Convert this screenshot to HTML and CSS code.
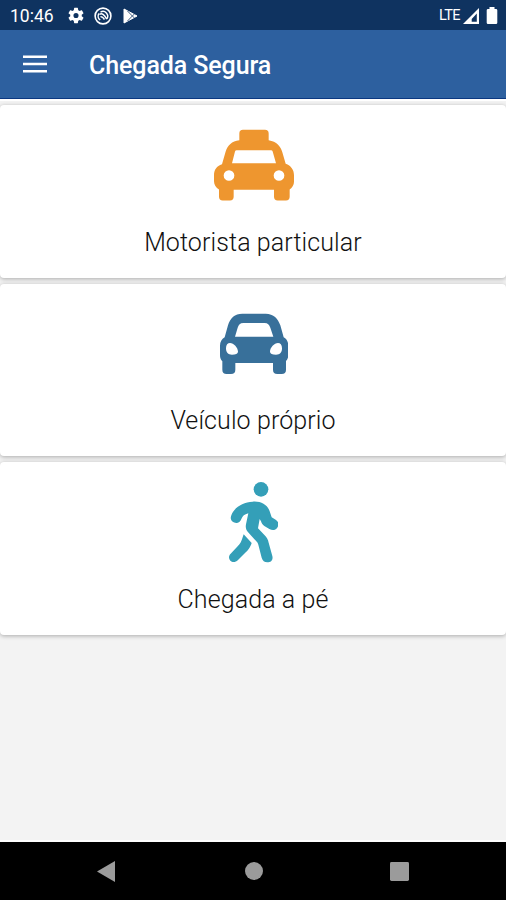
FILE: index.html
```html
<!DOCTYPE html>
<html lang="pt-BR">
<head>
  <meta charset="UTF-8" />
  <meta name="viewport" content="width=device-width, initial-scale=1.0"/>
  <title>Chegada Segura</title>
  <link rel="stylesheet" href="styles.css">
</head>
<body>
  <div class="status-bar">
    <span class="time">10:46</span>
    <svg class="icon-gear" width="16" height="17" viewBox="2 2 20 20" fill="#fff"><path d="M19.14 12.94c.04-.3.06-.61.06-.94 0-.32-.02-.64-.07-.94l2.03-1.58a.49.49 0 0 0 .12-.61l-1.92-3.32a.49.49 0 0 0-.59-.22l-2.39.96a7 7 0 0 0-1.62-.94l-.36-2.54a.48.48 0 0 0-.48-.41h-3.84a.47.47 0 0 0-.47.41l-.36 2.54c-.59.24-1.13.57-1.62.94l-2.39-.96a.48.48 0 0 0-.59.22L2.74 8.87a.47.47 0 0 0 .12.61l2.03 1.58c-.05.3-.09.63-.09.94s.02.64.07.94l-2.03 1.58a.49.49 0 0 0-.12.61l1.92 3.32c.12.22.37.29.59.22l2.39-.96c.5.38 1.03.7 1.62.94l.36 2.54c.05.24.24.41.48.41h3.84c.24 0 .44-.17.47-.41l.36-2.54c.59-.24 1.13-.56 1.62-.94l2.39.96c.22.08.47 0 .59-.22l1.92-3.32a.47.47 0 0 0-.12-.61zM12 15.2a3.2 3.2 0 1 1 0-6.4 3.2 3.2 0 0 1 0 6.4z"/></svg>
    <svg class="icon-sync" width="18" height="18" viewBox="0 0 18 18" fill="none" stroke="#fff"><circle cx="9" cy="9" r="7.9" stroke-width="1.600"/><path d="M6.200 13A4.700 4.700 0 0 1 5 6.500M6.500 5.100a4.700 4.700 0 0 1 6.300 6.700" stroke-width="1.500"/><path d="M5.500 7.300c2.600-1.300 4.300 0 7.300 4.900M6.500 9.800c1.500-.4 2.500.5 4 2.700" stroke-width="1.500"/></svg>
    <svg class="icon-play" width="15" height="16" viewBox="0 0 15 16"><path d="M1 1l13 7L1 15z" fill="#fff" stroke="#fff" stroke-linejoin="round"/><path d="M4.500 3L9.300 8l-4.800 5M11.700 5.800L9.300 8l2.400 2.200" fill="none" stroke="#0f3360" stroke-width=".8"/></svg>
    <span class="network">LTE</span>
    <svg class="icon-signal" width="16" height="16" viewBox="0 0 16 16"><path fill="#fff" fill-rule="evenodd" d="M0 16L16 0v16zM8.700 11v2.700h5.100V5.400z"/></svg>
    <svg class="icon-battery" width="12" height="17" viewBox="0 0 12 17" fill="#fff"><path d="M3.500 0h5v2H10q1.300 0 1.300 1.300v12.400q0 1.300-1.300 1.300H2q-1.300 0-1.300-1.300V3.300Q.7 2 2 2h1.500z"/></svg>
  </div>

  <header>
    <svg class="menu" width="24" height="18" viewBox="0 0 24 18" fill="#fff"><path d="M0 .5h24V3H0zM0 7.700h24v2.500H0zM0 15h24v2.500H0z"/></svg>
    <h1>Chegada Segura</h1>
  </header>

  <main>
    <a class="card">
      <svg width="82" height="82" viewBox="54 42 246 213" fill="#ee962f"><path fill-rule="evenodd" d="M147 43h66q11 0 11 11v20c24 4 36 18 41 36l10 35c16 6 25 18 25 34v20c0 9-5 18-13 23v22q0 11-11 11h-25q-11 0-11-11v-21H119v21q0 11-11 11H86q-11 0-11-11v-22c-9-6-15-15-15-25v-18c0-16 8-28 24-33l11-38c6-19 18-31 41-34V54q0-11 11-11zM128 104q-4 0-5 4l-9 35h132l-10-35q-1-4-5-4zM105 164a16 16 0 1 0 0 32 16 16 0 0 0 0-32zM255 164a16 16 0 1 0 0 32 16 16 0 0 0 0-32z"/></svg>
      <span>Motorista particular</span>
    </a>
    <a class="card">
      <svg width="70" height="82" viewBox="72 37 210 186" fill="#38709a"><path fill-rule="evenodd" d="M145 39h70c24 0 37 15 44 35l10 36c9 5 14 14 14 25v28c0 8-3 14-7 18v26q0 13-13 13h-13q-13 0-13-13v-20H124v20q0 13-13 13H98q-13 0-13-13v-25c-5-5-7-11-7-19v-28c0-11 5-20 14-25l10-36c7-22 20-35 43-35zM148 67c-10 0-14 5-17 14l-8 27h115l-9-27c-3-9-8-14-17-14zM108 127c-7 0-12 5-12 16 0 12 6 19 18 19 11 0 18-3 18-9 0-12-13-26-24-26zM252 127c-11 0-24 14-24 26 0 6 7 9 18 9 12 0 18-7 18-19 0-11-5-16-12-16z"/></svg>
      <span>Veículo próprio</span>
    </a>
    <a class="card">
      <svg width="50" height="82" viewBox="73 33 150 246" fill="#349fb8"><circle cx="172" cy="58" r="22"/><path d="M147 95c25-2 44 9 51 29l6 18 12 7c10 6 10 17 4 25-5 7-14 8-23 3l-15-9c-5-3-8-8-10-14l-4-7-5 28 20 21c7 7 10 13 12 22l11 40c3 12-4 19-15 19-9 0-14-5-17-14l-10-39c-1-4-3-7-6-10l-22-24c-9-9-11-17-9-27l7-33c-12 3-17 8-21 17-4 12-14 15-23 10-8-4-11-11-7-21 8-23 34-40 64-41zM120 193l24 26c-5 14-9 20-17 27l-24 24c-8 8-17 8-23 2-6-7-5-15 1-21l21-22c7-7 11-14 14-24z"/></svg>
      <span>Chegada a pé</span>
    </a>
  </main>

  <footer>
    <svg width="18" height="21" viewBox="0 0 18 21" fill="#9b9b9b"><path d="M0 10.500L18 0v21z"/></svg>
    <svg class="home" width="18" height="18" viewBox="0 0 18 18" fill="#9b9b9b"><circle cx="9" cy="9" r="9"/></svg>
    <svg width="19" height="19" viewBox="0 0 20 20" fill="#9b9b9b"><rect width="20" height="20" rx="1.500"/></svg>
  </footer>
</body>
</html>
```
FILE: styles.css
```css
body {
  font-family: Roboto, sans-serif;
  margin: 0;
  height: 900px;
  display: flex;
  flex-direction: column;
  background-color: #f3f3f3;
  overflow: hidden;
}

.status-bar {
  display: flex;
  align-items: center;
  box-sizing: border-box;
  height: 30px;
  padding: 1px 8px 0 10px;
  background-color: #0f3360;
  color: white;
}

.time {
  width: 58px;
  font-size: 17.5px;
}

.icon-sync {
  margin: 0 11px 0 10px;
}

.network {
  margin-left: auto;
  margin-right: 3px;
  font-size: 14.5px;
  letter-spacing: -0.6px;
}

.icon-battery {
  margin-left: 7px;
}

header {
  display: flex;
  align-items: center;
  box-sizing: border-box;
  height: 69px;
  padding-left: 23px;
  background-color: #2d609f;
  border-bottom: 1px solid #0b3881;
  color: white;
}

h1 {
  margin: 2px 0 0 42px;
  font-size: 25px;
  font-weight: 500;
  letter-spacing: -0.1px;
}

main {
  flex: 1;
  display: flex;
  flex-direction: column;
  gap: 6px;
  padding-top: 4px;
  border-top: 2px solid #fff;
  border-bottom: 2px solid #fff;
}

.card {
  display: flex;
  flex-direction: column;
  align-items: center;
  justify-content: space-between;
  box-sizing: border-box;
  height: 172.5px;
  padding: 19px 0 20px;
  background-color: white;
  border-radius: 4px;
  box-shadow: 0 1px 4px rgba(0,0,0,0.3);
  color: #111;
  font-size: 25px;
  line-height: 30px;
  font-weight: 300;
  letter-spacing: 0.1px;
}

footer {
  display: flex;
  align-items: center;
  justify-content: space-between;
  height: 58px;
  padding: 0 97px;
  background-color: #000;
}

.home {
  margin-left: 3px;
}
```
